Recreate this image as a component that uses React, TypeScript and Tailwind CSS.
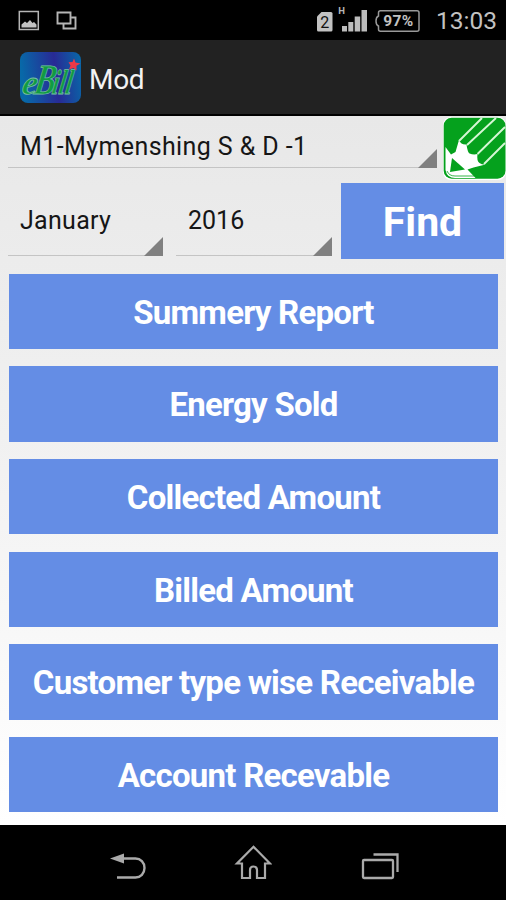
const reports = [
  'Summery Report',
  'Energy Sold',
  'Collected Amount',
  'Billed Amount',
  'Customer type wise Receivable',
  'Account Recevable',
]

function Spinner({ value, className }: { value: string; className: string }) {
  return (
    <button className={`relative flex items-center border-b border-[#c4c4c4] pl-3 text-left text-[25px] text-[#161616] ${className}`}>
      <span className="whitespace-nowrap">{value}</span>
      <svg className="absolute right-0 -bottom-px" width="19" height="19" viewBox="0 0 19 19">
        <path d="M19 0v19H0z" fill="#808080" />
      </svg>
    </button>
  )
}

function StatusBar() {
  return (
    <div className="flex h-10 shrink-0 items-center bg-black pr-[9px] pl-[18px] text-[#c2c2c2]">
      <svg width="60" height="40" viewBox="18 0 60 40" fill="none" stroke="#b5b5b5" strokeWidth="1.5">
        <rect x="19.3" y="11.5" width="19" height="18" />
        <path d="M21.5 27.5v-3l3.500-3 2 1.500 3-3 2.500 3 1.500-1 2.500 2.500v3z" fill="#c2c2c2" stroke="none" />
        <path d="M57.500 12.500h13v11h-13z M71.500 17.500h4v11h-12v-4" strokeWidth="1.9" />
      </svg>
      <svg className="ml-auto" width="106" height="40" viewBox="316 0 106 40">
        <path d="M321.500 12H331q1.500 0 1.500 1.500V30q0 1.500-1.500 1.500h-12.500q-1.500 0-1.500-1.500V16.500z" fill="#c2c2c2" />
        <text x="324.800" y="27.500" textAnchor="middle" fontSize="16" fontFamily="Roboto, sans-serif" fill="#111">2</text>
        <text x="341.500" y="14" textAnchor="middle" fontSize="9.500" fontWeight="700" fontFamily="Roboto, sans-serif" fill="#b5b5b5">H</text>
        <path d="M342 26h5v5.500h-5zM348.300 22h5v9.500h-5zM354.700 16.500h5.500v15h-5.500zM361.500 10h5.500v21.500h-5.500z" fill="#bcbcbc" />
        <path d="M380.500 10.700H417q2 0 2 2v16.600q0 2-2 2h-36.500q-2 0-2-2V26q-2.500-1-2.500-5t2.500-5v-3.300q0-2 2-2z" fill="none" stroke="#999" strokeWidth="1.500" />
        <text x="398.500" y="26" textAnchor="middle" fontSize="15.500" fontWeight="700" letterSpacing="0.4" fontFamily="Roboto, sans-serif" fill="#c2c2c2">97%</text>
      </svg>
      <span className="ml-[14px] pt-[2px] text-[24.500px] leading-none">13:03</span>
    </div>
  )
}

function AppLogo() {
  return (
    <svg className="overflow-visible" width="61" height="51" viewBox="0 0 61 51">
      <defs>
        <linearGradient id="logo" x1="0" y1="0.1" x2="1" y2="0">
          <stop offset="0" stopColor="#0868a8" />
          <stop offset="0.55" stopColor="#282a95" />
          <stop offset="1" stopColor="#0769a8" />
        </linearGradient>
      </defs>
      <rect width="61" height="51" rx="8" fill="url(#logo)" />
      <text
        transform="translate(1 42) skewX(-10)"
        fontStyle="italic"
        fontWeight="700"
        fontFamily="'Liberation Serif', serif"
        fill="#119b42"
        stroke="#78bda6"
        strokeWidth="0.8"
      >
        <tspan x="0" fontSize="34">e</tspan>
        <tspan x="12" fontSize="43" textLength="21" lengthAdjust="spacingAndGlyphs">B</tspan>
        <tspan x="30" fontSize="35" textLength="20" lengthAdjust="spacingAndGlyphs">ill</tspan>
      </text>
      <path d="M54 6.500l1.500 4 5 1-4 2.300v4.700l-3-2.500-4.500 1.500 1.500-4-2-3.200 4-.3z" fill="#ed3947" />
    </svg>
  )
}

function PencilIcon() {
  return (
    <svg width="63" height="63" viewBox="0 0 63 63">
      <rect width="63" height="63" rx="8" fill="#fff" />
      <rect x="0.700" y="0.700" width="61.800" height="61" rx="8" fill="#05a11d" />
      <path d="M2.500 30l5.500 7.500 4.500-2.500 3.500-12q2 5 7.500 4.500 1 7.500 3 9 4 1.500 8 .5-1 7 2 9 3 2 6 1.500l-12 3-6 2 8 8.500H12q-8 0-9.500-8z" fill="#fff" />
      <path d="M9 41l13 11.500-15 2.500z" fill="#05a11d" />
      <path d="M4 54q2 5 8 5h19" fill="none" stroke="#05a11d" strokeWidth="0.8" />
      <path d="M16 24L39 1M24 28L53 1M34.500 37L62 10M41 47L62 26" fill="none" stroke="#d6f7d5" strokeWidth="1.900" />
    </svg>
  )
}

function NavBar() {
  return (
    <nav className="flex h-[75px] shrink-0 items-center justify-between bg-black px-[109px]">
      <svg width="38" height="36" viewBox="109 845 38 36">
        <path d="M110 858.500l14-5v10z" fill="#aaa" />
        <path d="M122 858.500h13.500c5 0 9 4 9 9.500s-4 9.500-9 9.500H117" fill="none" stroke="#aaa" strokeWidth="2.400" />
      </svg>
      <svg width="38" height="36" viewBox="234 845 38 36" fill="none" stroke="#aaa" strokeWidth="2.200">
        <path d="M253.500 846.800l16.500 16.700h-5v14.500h-8v-8q0-3.500-3.500-3.500t-3.500 3.500v8h-8v-14.500h-5z" />
      </svg>
      <svg className="overflow-visible" width="38" height="36" viewBox="359 845 38 36" fill="none" stroke="#aaa" strokeWidth="2.300">
        <rect x="363" y="860" width="30" height="18" rx="1" />
        <path d="M373.500 854.500h24V872" />
      </svg>
    </nav>
  )
}

export default function App() {
  return (
    <div className="flex h-[900px] w-[506px] flex-col overflow-hidden bg-black font-['Roboto',sans-serif]">
      <StatusBar />
      <header className="flex h-[76px] shrink-0 items-center gap-2 border-b-2 border-black bg-[#222] pl-5 text-[28px] text-[#f2f2f2]">
        <AppLogo />
        <h1 className="pt-[5px] tracking-[-0.3px]">Mod</h1>
      </header>
      <main className="flex h-[709px] shrink-0 flex-col bg-linear-to-b from-[#e8e8e8] via-[#f2f2f2] to-white pt-px">
        <div className="flex h-[63px] items-start justify-between pl-2">
          <Spinner value="M1-Mymenshing S & D -1" className="h-[51px] w-[429px] pt-[9px] tracking-[0.4px]" />
          <PencilIcon />
        </div>
        <div className="mt-[3px] flex h-[76px] items-start pl-2">
          <Spinner value="January" className="h-[73px] w-[155px] pt-1 tracking-[0.3px]" />
          <Spinner value="2016" className="ml-[13px] h-[73px] w-[156px] pt-1" />
          <button className="ml-[9px] h-[76px] w-[163px] bg-[#648de5] pt-[3px] text-[41px] leading-none font-bold text-white">Find</button>
        </div>
        <div className="mt-[14.5px] flex flex-col gap-[17.2px] pr-2 pl-[9px]">
          {reports.map(name => (
            <button key={name} className="h-[75.5px] bg-[#648de5] pt-[2px] text-[33px] font-bold tracking-[-0.76px] whitespace-nowrap text-white">
              {name}
            </button>
          ))}
        </div>
      </main>
      <NavBar />
    </div>
  )
}
